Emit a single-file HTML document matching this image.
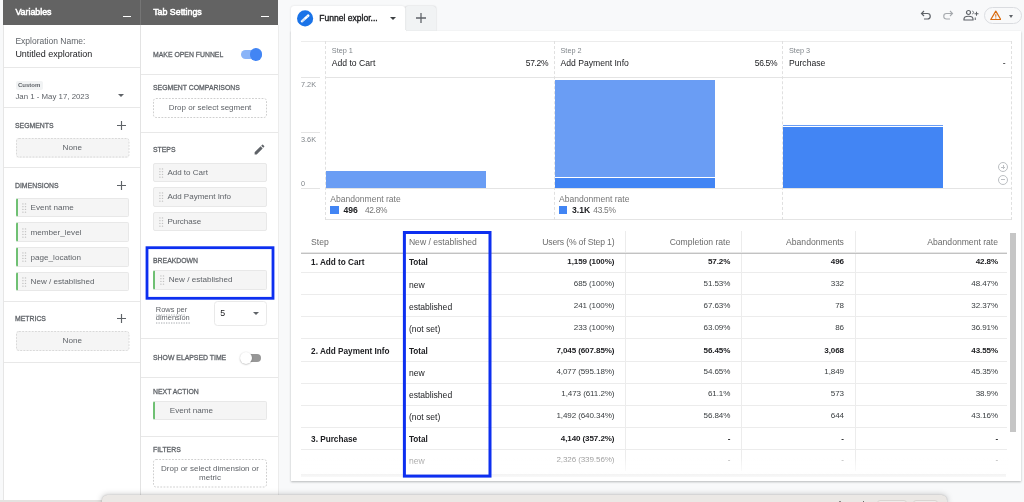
<!DOCTYPE html>
<html><head><meta charset="utf-8">
<style>
*{box-sizing:border-box;margin:0;padding:0}
html,body{width:1024px;height:502px;overflow:hidden;background:#f8f9fa;font-family:"Liberation Sans",sans-serif;color:#202124}
#root{position:relative;width:1024px;height:502px;overflow:hidden;transform:translateZ(0);filter:contrast(1.0001)}
.a{position:absolute}
.t{position:absolute;white-space:nowrap;line-height:12px;height:12px}
.hd{background:#636363}
.pn{background:#fff}
.dv{position:absolute;height:1px;background:#e8e8e8}
.lbl{font-weight:400;font-size:7.4px;color:#5f6368;-webkit-text-stroke:0.3px #5f6368;transform:scaleX(.93);transform-origin:0 50%}
.chip{position:absolute;background:#f5f5f5;border:1px solid #e8e8e8;border-radius:2px}
.chip.g{border-left:2px solid #6fc073}
.chipd{position:absolute;background:#f5f5f5;border-radius:2px}.dsh{position:absolute;left:0;top:0;width:100%;height:100%;overflow:visible}
.drop{position:absolute;background:#fff;border-radius:3px}
.ct{font-size:8.1px;color:#5f6368}
.grip{position:absolute;width:5.4px;height:11px;background-image:radial-gradient(circle,#b9b9b9 0.65px,transparent 1.05px);background-size:2.7px 2.75px}
.plus{position:absolute;width:9px;height:9px}
.plus:before{content:"";position:absolute;left:0;top:3.9px;width:9px;height:1.2px;background:#5f6368}
.plus:after{content:"";position:absolute;left:3.9px;top:0;width:1.2px;height:9px;background:#5f6368}

.ax{font-size:7.3px;color:#80868b}
.st{font-size:7.3px;color:#80868b}
.sn{font-size:8.6px;color:#202124}
.ar{font-size:8.57px;color:#757575}
.av{font-size:8.6px;font-weight:700;color:#202124}
.ap{font-size:8.4px;color:#757575;letter-spacing:-0.3px}
.zi{position:absolute;width:10px;height:10px;border:1px solid #bcbfc3;border-radius:50%}
.zi i{position:absolute;background:#bcbfc3}

.th{font-size:8.6px;color:#6b6b6b}
.tb{font-size:8.2px;font-weight:700;color:#202124;margin-top:1px}
.tx{font-size:8.55px;color:#202124}
.tn{font-size:8.05px;color:#3c4043;letter-spacing:-0.1px;margin-top:-1px}
.tnb{font-size:8.05px;font-weight:700;color:#202124;letter-spacing:-0.1px}
.fd{color:#8f8f8f}
</style></head><body><div id="root">
<svg width="0" height="0" style="position:absolute"><defs>
<g id="grip"><circle cx="0.9" cy="0.9" r="0.72"/><circle cx="3.5" cy="0.9" r="0.72"/><circle cx="0.9" cy="3.65" r="0.72"/><circle cx="3.5" cy="3.65" r="0.72"/><circle cx="0.9" cy="6.4" r="0.72"/><circle cx="3.5" cy="6.4" r="0.72"/><circle cx="0.9" cy="9.15" r="0.72"/><circle cx="3.5" cy="9.15" r="0.72"/></g>
<g id="plus"><path d="M0 4.500H9M4.500 0V9" stroke="#5f6368" stroke-width="1.150" fill="none"/></g>
</defs></svg>


<!-- LEFT PANELS -->
<div class="a pn" style="left:3px;top:0;width:275px;height:502px;border-left:1px solid #e6e6e6"></div>
<div class="a hd" style="left:3px;top:0;width:275px;height:24.5px"></div>
<div class="a" style="left:140px;top:0;width:1px;height:24.5px;background:#757575"></div>
<div class="a" style="left:140px;top:24.5px;width:1px;height:478px;background:#e3e3e3"></div>
<div class="a" style="left:278px;top:24.5px;width:1px;height:478px;background:#ececec"></div>

<!-- Variables panel -->
<div class="t" style="left:15.4px;top:6px;font-size:8.84px;font-weight:400;-webkit-text-stroke:0.55px #fff;color:#fff">Variables</div>
<div class="a" style="left:123.3px;top:16px;width:7.7px;height:1px;background:#fff"></div>
<div class="t" style="left:15.4px;top:35px;font-size:8.5px;color:#5f6368">Exploration Name:</div>
<div class="t" style="left:15.4px;top:48px;font-size:8.97px;color:#202124">Untitled exploration</div>
<div class="dv" style="left:4px;top:67px;width:136px"></div>
<div class="a" style="left:15.7px;top:80.8px;width:27px;height:9.3px;background:#f1f3f4;border-radius:2px"></div>
<div class="t" style="left:18px;top:78.5px;font-size:6px;font-weight:700;color:#5f6368">Custom</div>
<div class="t" style="left:15.4px;top:91px;font-size:7.85px;color:#5f6368">Jan 1 - May 17, 2023</div>
<div class="a" style="left:117.5px;top:94px;width:0;height:0;border-left:3px solid transparent;border-right:3px solid transparent;border-top:3px solid #5f6368"></div>
<div class="dv" style="left:4px;top:107.2px;width:136px"></div>

<div class="t lbl" style="left:15.4px;top:119.5px">SEGMENTS</div>
<svg class="a" style="left:117.0px;top:120.5px" width="9" height="9"><use href="#plus"/></svg>
<div class="chipd" style="left:15.5px;top:138px;width:113.5px;height:19.5px"><svg class="dsh" width="113.5" height="19.5"><rect x="0.5" y="0.5" width="112.5" height="18.5" rx="2.500" fill="none" stroke="#d9d9d9" stroke-width="1" stroke-dasharray="1.800 1.400"/></svg></div>
<div class="t ct" style="left:15.5px;width:113.5px;text-align:center;top:142px">None</div>
<div class="dv" style="left:4px;top:167px;width:136px"></div>

<div class="t lbl" style="left:15.4px;top:179.5px">DIMENSIONS</div>
<svg class="a" style="left:117.0px;top:180.5px" width="9" height="9"><use href="#plus"/></svg>
<div class="chip g" style="left:15.5px;top:197.5px;width:113.5px;height:19.5px"></div>
<svg class="a" style="left:21.5px;top:202.9px" width="5" height="11" fill="#c2c2c2"><use href="#grip"/></svg>
<div class="t ct" style="left:30.6px;top:201.5px">Event name</div>
<div class="chip g" style="left:15.5px;top:222.2px;width:113.5px;height:19.5px"></div>
<svg class="a" style="left:21.5px;top:227.6px" width="5" height="11" fill="#c2c2c2"><use href="#grip"/></svg>
<div class="t ct" style="left:30.6px;top:227px">member_level</div>
<div class="chip g" style="left:15.5px;top:247px;width:113.5px;height:19.5px"></div>
<svg class="a" style="left:21.5px;top:252.4px" width="5" height="11" fill="#c2c2c2"><use href="#grip"/></svg>
<div class="t ct" style="left:30.6px;top:251.6px">page_location</div>
<div class="chip g" style="left:15.5px;top:271.7px;width:113.5px;height:19.5px"></div>
<svg class="a" style="left:21.5px;top:277.1px" width="5" height="11" fill="#c2c2c2"><use href="#grip"/></svg>
<div class="t ct" style="left:30.6px;top:275.7px">New / established</div>
<div class="dv" style="left:4px;top:301px;width:136px"></div>

<div class="t lbl" style="left:15.4px;top:313px">METRICS</div>
<svg class="a" style="left:117.0px;top:314.0px" width="9" height="9"><use href="#plus"/></svg>
<div class="chipd" style="left:15.5px;top:331px;width:113.5px;height:20px"><svg class="dsh" width="113.5" height="20.0"><rect x="0.5" y="0.5" width="112.5" height="19.0" rx="2.500" fill="none" stroke="#d9d9d9" stroke-width="1" stroke-dasharray="1.800 1.400"/></svg></div>
<div class="t ct" style="left:15.5px;width:113.5px;text-align:center;top:335px">None</div>
<div class="dv" style="left:4px;top:361.5px;width:136px"></div>

<!-- Tab settings panel -->
<div class="t" style="left:153.2px;top:6px;font-size:8.84px;font-weight:400;-webkit-text-stroke:0.55px #fff;color:#fff">Tab Settings</div>
<div class="a" style="left:261.3px;top:16px;width:7.7px;height:1px;background:#fff"></div>

<div class="t lbl" style="left:153.2px;top:48.5px">MAKE OPEN FUNNEL</div>
<div class="a" style="left:240.5px;top:50px;width:21px;height:8.5px;border-radius:5px;background:#8ab4f8"></div>
<div class="a" style="left:249.5px;top:48px;width:12.5px;height:12.5px;border-radius:50%;background:#4285f4"></div>
<div class="dv" style="left:141px;top:74px;width:137px"></div>

<div class="t lbl" style="left:153.2px;top:81.8px">SEGMENT COMPARISONS</div>
<div class="drop" style="left:153px;top:97.5px;width:114px;height:20px"><svg class="dsh" width="114.0" height="20.0"><rect x="0.5" y="0.5" width="113.0" height="19.0" rx="2.500" fill="none" stroke="#cfcfcf" stroke-width="1" stroke-dasharray="1.800 1.400"/></svg></div>
<div class="t ct" style="left:153px;width:114px;text-align:center;top:102px;font-size:8px">Drop or select segment</div>
<div class="dv" style="left:141px;top:132px;width:137px"></div>

<div class="t lbl" style="left:153.2px;top:144px">STEPS</div>
<svg class="a" style="left:253px;top:143px" width="13" height="13" viewBox="0 0 24 24"><path fill="#5f6368" d="M3 17.25V21h3.75L17.81 9.94l-3.75-3.75L3 17.25zM20.71 7.04a1 1 0 0 0 0-1.41l-2.34-2.34a1 1 0 0 0-1.41 0l-1.83 1.83 3.75 3.75 1.83-1.83z"/></svg>
<div class="chip" style="left:153px;top:162.5px;width:114px;height:19.5px"></div>
<svg class="a" style="left:159.0px;top:167.9px" width="5" height="11" fill="#c2c2c2"><use href="#grip"/></svg>
<div class="t ct" style="left:167.4px;top:166.5px;font-size:8px">Add to Cart</div>
<div class="chip" style="left:153px;top:187px;width:114px;height:19.5px"></div>
<svg class="a" style="left:159.0px;top:192.4px" width="5" height="11" fill="#c2c2c2"><use href="#grip"/></svg>
<div class="t ct" style="left:167.4px;top:191px;font-size:8px">Add Payment Info</div>
<div class="chip" style="left:153px;top:211.7px;width:114px;height:19.5px"></div>
<svg class="a" style="left:159.0px;top:217.1px" width="5" height="11" fill="#c2c2c2"><use href="#grip"/></svg>
<div class="t ct" style="left:167.4px;top:215.7px;font-size:8px">Purchase</div>

<svg class="a" style="left:140px;top:240px" width="140" height="65"><rect x="7" y="7.700" width="126" height="50.600" fill="none" stroke="#0d2ff0" stroke-width="2.800"/></svg>
<div class="t lbl" style="left:153.2px;top:254.5px">BREAKDOWN</div>
<div class="chip g" style="left:153px;top:270px;width:114px;height:19.5px"></div>
<svg class="a" style="left:159.5px;top:275.4px" width="5" height="11" fill="#c2c2c2"><use href="#grip"/></svg>
<div class="t ct" style="left:168.7px;top:274px">New / established</div>

<div class="t" style="left:155.8px;top:304px;font-size:7.45px;color:#5f6368">Rows per</div>
<div class="t" style="left:155.8px;top:311.5px;font-size:7.45px;color:#5f6368">dimension</div>
<svg class="a" style="left:155.8px;top:322.300px" width="34.200" height="2"><path d="M0 1H34.200" stroke="#a4a8ad" stroke-width="1" stroke-dasharray="1.300 1.200"/></svg><svg class="a" style="left:155.8px;top:313.600px" width="30" height="2"><path d="M0 1H30" stroke="#b4b8bc" stroke-width="1" stroke-dasharray="1.300 1.200"/></svg>
<div class="a" style="left:214px;top:301px;width:53px;height:25px;border:1px solid #e9e9e9;border-radius:3.5px;background:#fff"></div>
<div class="t" style="left:220.3px;top:307px;font-size:8.800px;color:#202124">5</div>
<div class="a" style="left:252.5px;top:312px;width:0;height:0;border-left:3px solid transparent;border-right:3px solid transparent;border-top:3px solid #5f6368"></div>
<div class="dv" style="left:141px;top:338px;width:137px"></div>

<div class="t lbl" style="left:153.2px;top:352px">SHOW ELAPSED TIME</div>
<div class="a" style="left:243px;top:354px;width:18px;height:8px;border-radius:4px;background:#979797"></div>
<div class="a" style="left:239.5px;top:351.5px;width:12.5px;height:12.5px;border-radius:50%;background:#fff;box-shadow:0 0.5px 1.600px rgba(0,0,0,.32)"></div>
<div class="dv" style="left:141px;top:377px;width:137px"></div>

<div class="t lbl" style="left:153.2px;top:385.5px">NEXT ACTION</div>
<div class="chip g" style="left:153px;top:400.7px;width:114px;height:19.8px"></div>
<div class="t ct" style="left:169.8px;top:404.8px">Event name</div>
<div class="dv" style="left:141px;top:435.5px;width:137px"></div>

<div class="t lbl" style="left:153.2px;top:444px">FILTERS</div>
<div class="drop" style="left:153px;top:459px;width:114px;height:28.5px"><svg class="dsh" width="114.0" height="28.5"><rect x="0.5" y="0.5" width="113.0" height="27.5" rx="2.500" fill="none" stroke="#cfcfcf" stroke-width="1" stroke-dasharray="1.800 1.400"/></svg></div>
<div class="t ct" style="left:153px;width:114px;text-align:center;top:463px;font-size:8px">Drop or select dimension or</div>
<div class="t ct" style="left:153px;width:114px;text-align:center;top:472px;font-size:8px">metric</div>

<!-- MAIN -->

<!-- tabs -->
<div class="a" style="left:405px;top:5.5px;width:31px;height:25px;background:#f1f3f4;border-radius:3px 3px 0 0;box-shadow:0 0 1.5px rgba(0,0,0,.25)"></div>
<div class="a" style="left:291.3px;top:30.5px;width:730.2px;height:450.5px;background:#fff;box-shadow:0 0.5px 2px rgba(60,64,67,.35)"></div>
<div class="a" style="left:291.3px;top:5.5px;width:113.7px;height:27px;background:#fff;border-radius:3px 3px 0 0;box-shadow:0 0 2px rgba(60,64,67,.16)"></div>
<div class="a" style="left:291.3px;top:30px;width:114.5px;height:7px;background:#fff"></div>
<svg class="a" style="left:296px;top:9px" width="19" height="19" viewBox="0 0 19 19"><circle cx="9.1" cy="9.400" r="8.050" fill="#1a73e8"/><g transform="translate(9.1 9.400) rotate(-42)"><rect x="-5.300" y="-1.250" width="10.600" height="2.500" rx="0.900" fill="#fff"/><path d="M-3.800 -1.250V1.250M-2.400 -1.250V1.250M-1 -1.250V1.250" stroke="#1a73e8" stroke-width="0.450" opacity=".75"/><path d="M2.900 -1.250V1.250" stroke="#1a73e8" stroke-width="0.500" opacity=".5"/></g></svg>
<div class="t" style="left:319.3px;top:12px;font-size:8.55px;font-weight:400;color:#202124;-webkit-text-stroke:0.35px #202124">Funnel explor...</div>
<div class="a" style="left:390px;top:16.5px;width:0;height:0;border-left:3px solid transparent;border-right:3px solid transparent;border-top:3px solid #3c4043"></div>
<svg class="a" style="left:415.8px;top:13.2px" width="10" height="10" viewBox="0 0 9 9"><use href="#plus"/></svg>

<!-- top-right icons -->
<svg class="a" style="left:920px;top:8.900px" width="12" height="12" viewBox="0 0 24 24" fill="none" stroke="#5f6368" stroke-width="2.4"><path d="M8 4 L3 9 L8 14"/><path d="M3 9 H15 a5.5 5.5 0 0 1 0 11 H8"/></svg>
<svg class="a" style="left:942px;top:8.900px" width="12" height="12" viewBox="0 0 24 24" fill="none" stroke="#a5a9ad" stroke-width="2.2"><path d="M16 4 L21 9 L16 14"/><path d="M21 9 H9 a5.5 5.5 0 0 0 0 11 H16"/></svg>
<svg class="a" style="left:962.5px;top:8.800px" width="16" height="12" viewBox="0 0 32 24" fill="none" stroke="#5f6368" stroke-width="2.4"><circle cx="11" cy="7" r="4"/><path d="M2 22 v-2 c0-4 5-5.5 9-5.5 s9 1.500 9 5.500 v2 z"/><path d="M19 3.500 a4.500 4.500 0 0 1 0 7" stroke-width="1.800"/><path d="M27 5.500 v8 M23 9.500 h8" stroke-width="2"/><path d="M24.500 17 v5" stroke-width="2"/></svg>
<div class="a" style="left:984.4px;top:6.6px;width:37.2px;height:17px;border:1px solid #dadce0;border-radius:9px;background:#f8f9fa"></div>
<svg class="a" style="left:989.6px;top:10.3px" width="11.600" height="10" viewBox="0 0 24 21"><path d="M12 2.500 L22.500 20 H1.500 Z" fill="none" stroke="#d96b0f" stroke-width="2.600" stroke-linejoin="round"/><path d="M12 9 v5 M12 16 v2" stroke="#d96b0f" stroke-width="2.200"/></svg>
<div class="a" style="left:1008.9px;top:14.5px;width:0;height:0;border-left:2.600px solid transparent;border-right:2.600px solid transparent;border-top:3px solid #5f6368"></div>

<!-- chart -->
<div class="a" style="left:301px;top:40.5px;width:711px;height:1.5px;background:#ececec"></div>
<div class="a" style="left:301px;top:77px;width:19px;height:1px;background:#e4e4e4"></div><div class="a" style="left:326px;top:77px;width:686px;height:1px;background:#e4e4e4"></div>
<div class="a" style="left:301px;top:132px;width:19px;height:1px;background:#e4e4e4"></div>
<div class="a" style="left:301px;top:188px;width:19px;height:1px;background:#e4e4e4"></div><div class="a" style="left:326px;top:188px;width:686px;height:1px;background:#e4e4e4"></div>
<div class="a" style="left:326px;top:219.3px;width:686px;height:1px;background:#e4e4e4"></div>
<div class="a" style="left:325px;top:41px;width:0;height:179px;border-left:1px dashed #e0e0e0"></div>
<div class="a" style="left:554.2px;top:41px;width:0;height:179px;border-left:1px dashed #e0e0e0"></div>
<div class="a" style="left:782px;top:41px;width:0;height:179px;border-left:1px dashed #e0e0e0"></div>
<div class="a" style="left:1011px;top:41px;width:0;height:179px;border-left:1px dashed #e0e0e0"></div>

<div class="t ax" style="left:301px;top:79px">7.2K</div>
<div class="t ax" style="left:301px;top:134.3px">3.6K</div>
<div class="t ax" style="left:301px;top:178px">0</div>

<div class="t st" style="left:331.8px;top:45px">Step 1</div>
<div class="t sn" style="left:331.8px;top:56.5px">Add to Cart</div>
<div class="t sn" style="left:498px;width:50.2px;text-align:right;top:56.5px;font-size:8.5px;letter-spacing:-0.35px">57.2%</div>
<div class="t st" style="left:560.5px;top:45px">Step 2</div>
<div class="t sn" style="left:560.5px;top:56.5px">Add Payment Info</div>
<div class="t sn" style="left:727px;width:50.2px;text-align:right;top:56.5px;font-size:8.5px;letter-spacing:-0.35px">56.5%</div>
<div class="t st" style="left:789px;top:45px">Step 3</div>
<div class="t sn" style="left:789px;top:56.5px">Purchase</div>
<div class="t sn" style="left:955px;width:50.5px;text-align:right;top:56.5px">-</div>

<div class="a" style="left:326px;top:170.7px;width:160px;height:17.7px;background:#6a9df4"></div>
<div class="a" style="left:554.5px;top:79.700px;width:160px;height:108.7px;background:#6a9df4"></div>
<div class="a" style="left:554.5px;top:178.4px;width:160px;height:10px;background:#4285f4"></div>
<div class="a" style="left:554.5px;top:177.3px;width:160px;height:1.1px;background:#fff"></div>
<div class="a" style="left:783px;top:127.3px;width:160px;height:61.1px;background:#4285f4"></div>
<div class="a" style="left:783px;top:125px;width:160px;height:1.2px;background:#6a9df4"></div>


<div class="t ar" style="left:330.3px;top:192.7px">Abandonment rate</div>
<div class="a" style="left:330.2px;top:206.1px;width:8.5px;height:8.300px;background:#4285f4"></div>
<div class="t av" style="left:343.4px;top:204.4px">496</div>
<div class="t ap" style="left:364.9px;top:204.4px">42.8%</div>
<div class="t ar" style="left:559px;top:192.7px">Abandonment rate</div>
<div class="a" style="left:558.9px;top:206.1px;width:8.5px;height:8.300px;background:#4285f4"></div>
<div class="t av" style="left:572px;top:204.4px">3.1K</div>
<div class="t ap" style="left:593.3px;top:204.4px">43.5%</div>

<div class="zi" style="left:998px;top:162px"><i style="left:1.800px;top:3.500px;width:4.400px;height:1px"></i><i style="left:3.500px;top:1.800px;width:1px;height:4.400px"></i></div>
<div class="zi" style="left:998px;top:174.7px"><i style="left:1.800px;top:3.500px;width:4.400px;height:1px"></i></div>

<!-- table -->
<div class="a" style="left:624.5px;top:230.6px;width:1px;height:240px;background:#ececec"></div>
<div class="a" style="left:740.8px;top:230.6px;width:1px;height:240px;background:#ececec"></div>
<div class="a" style="left:854.7px;top:230.6px;width:1px;height:240px;background:#ececec"></div>
<div class="t th" style="left:311.1px;top:236.4px">Step</div>
<div class="t th" style="left:408.9px;top:236.4px">New / established</div>
<div class="t th" style="left:494.4px;width:120px;text-align:right;top:236.4px;letter-spacing:-0.15px">Users (% of Step 1)</div>
<div class="t th" style="left:610.3px;width:120px;text-align:right;top:236.4px">Completion rate</div>
<div class="t th" style="left:723.9px;width:120px;text-align:right;top:236.4px">Abandonments</div>
<div class="t th" style="left:878px;width:120px;text-align:right;top:236.4px">Abandonment rate</div>
<div class="a" style="left:301.3px;top:252px;width:706px;height:1px;background:#e6e6e6"></div><div class="a" style="left:301.3px;top:253px;width:706px;height:1px;background:#c2c2c2"></div>
<div class="a" style="left:301.3px;top:272px;width:706px;height:1px;background:#ececec"></div>
<div class="t tb" style="left:311.1px;top:256.4px">1. Add to Cart</div>
<div class="t tb" style="left:408.9px;top:256.4px">Total</div>
<div class="t tnb" style="left:494.4px;width:120px;text-align:right;top:256.4px">1,159 (100%)</div>
<div class="t tnb" style="left:610.3px;width:120px;text-align:right;top:256.4px">57.2%</div>
<div class="t tnb" style="left:723.9px;width:120px;text-align:right;top:256.4px">496</div>
<div class="t tnb" style="left:878px;width:120px;text-align:right;top:256.4px">42.8%</div>
<div class="a" style="left:301.3px;top:294px;width:706px;height:1px;background:#ececec"></div>
<div class="t tx" style="left:408.9px;top:278.5px">new</div>
<div class="t tn" style="left:494.4px;width:120px;text-align:right;top:278.5px">685 (100%)</div>
<div class="t tn" style="left:610.3px;width:120px;text-align:right;top:278.5px">51.53%</div>
<div class="t tn" style="left:723.9px;width:120px;text-align:right;top:278.5px">332</div>
<div class="t tn" style="left:878px;width:120px;text-align:right;top:278.5px">48.47%</div>
<div class="a" style="left:301.3px;top:316px;width:706px;height:1px;background:#ececec"></div>
<div class="t tx" style="left:408.9px;top:300.6px">established</div>
<div class="t tn" style="left:494.4px;width:120px;text-align:right;top:300.6px">241 (100%)</div>
<div class="t tn" style="left:610.3px;width:120px;text-align:right;top:300.6px">67.63%</div>
<div class="t tn" style="left:723.9px;width:120px;text-align:right;top:300.6px">78</div>
<div class="t tn" style="left:878px;width:120px;text-align:right;top:300.6px">32.37%</div>
<div class="a" style="left:301.3px;top:338px;width:706px;height:1px;background:#ececec"></div>
<div class="t tx" style="left:408.9px;top:322.7px">(not set)</div>
<div class="t tn" style="left:494.4px;width:120px;text-align:right;top:322.7px">233 (100%)</div>
<div class="t tn" style="left:610.3px;width:120px;text-align:right;top:322.7px">63.09%</div>
<div class="t tn" style="left:723.9px;width:120px;text-align:right;top:322.7px">86</div>
<div class="t tn" style="left:878px;width:120px;text-align:right;top:322.7px">36.91%</div>
<div class="a" style="left:301.3px;top:361px;width:706px;height:1px;background:#ececec"></div>
<div class="t tb" style="left:311.1px;top:344.8px">2. Add Payment Info</div>
<div class="t tb" style="left:408.9px;top:344.8px">Total</div>
<div class="t tnb" style="left:494.4px;width:120px;text-align:right;top:344.8px">7,045 (607.85%)</div>
<div class="t tnb" style="left:610.3px;width:120px;text-align:right;top:344.8px">56.45%</div>
<div class="t tnb" style="left:723.9px;width:120px;text-align:right;top:344.8px">3,068</div>
<div class="t tnb" style="left:878px;width:120px;text-align:right;top:344.8px">43.55%</div>
<div class="a" style="left:301.3px;top:383px;width:706px;height:1px;background:#ececec"></div>
<div class="t tx" style="left:408.9px;top:366.9px">new</div>
<div class="t tn" style="left:494.4px;width:120px;text-align:right;top:366.9px">4,077 (595.18%)</div>
<div class="t tn" style="left:610.3px;width:120px;text-align:right;top:366.9px">54.65%</div>
<div class="t tn" style="left:723.9px;width:120px;text-align:right;top:366.9px">1,849</div>
<div class="t tn" style="left:878px;width:120px;text-align:right;top:366.9px">45.35%</div>
<div class="a" style="left:301.3px;top:405px;width:706px;height:1px;background:#ececec"></div>
<div class="t tx" style="left:408.9px;top:389.0px">established</div>
<div class="t tn" style="left:494.4px;width:120px;text-align:right;top:389.0px">1,473 (611.2%)</div>
<div class="t tn" style="left:610.3px;width:120px;text-align:right;top:389.0px">61.1%</div>
<div class="t tn" style="left:723.9px;width:120px;text-align:right;top:389.0px">573</div>
<div class="t tn" style="left:878px;width:120px;text-align:right;top:389.0px">38.9%</div>
<div class="a" style="left:301.3px;top:427px;width:706px;height:1px;background:#ececec"></div>
<div class="t tx" style="left:408.9px;top:411.1px">(not set)</div>
<div class="t tn" style="left:494.4px;width:120px;text-align:right;top:411.1px">1,492 (640.34%)</div>
<div class="t tn" style="left:610.3px;width:120px;text-align:right;top:411.1px">56.84%</div>
<div class="t tn" style="left:723.9px;width:120px;text-align:right;top:411.1px">644</div>
<div class="t tn" style="left:878px;width:120px;text-align:right;top:411.1px">43.16%</div>
<div class="a" style="left:301.3px;top:449px;width:706px;height:1px;background:#ececec"></div>
<div class="t tb" style="left:311.1px;top:433.2px">3. Purchase</div>
<div class="t tb" style="left:408.9px;top:433.2px">Total</div>
<div class="t tnb" style="left:494.4px;width:120px;text-align:right;top:433.2px">4,140 (357.2%)</div>
<div class="t tnb" style="left:610.3px;width:120px;text-align:right;top:433.2px">-</div>
<div class="t tnb" style="left:723.9px;width:120px;text-align:right;top:433.2px">-</div>
<div class="t tnb" style="left:878px;width:120px;text-align:right;top:433.2px">-</div>
<div class="t tx fd" style="left:408.9px;top:455.3px">new</div>
<div class="t tn fd" style="left:494.4px;width:120px;text-align:right;top:455.3px">2,326 (339.56%)</div>
<div class="t tn fd" style="left:610.3px;width:120px;text-align:right;top:455.3px">-</div>
<div class="t tn fd" style="left:723.9px;width:120px;text-align:right;top:455.3px">-</div>
<div class="t tn fd" style="left:878px;width:120px;text-align:right;top:455.3px">-</div>
<div class="a" style="left:301px;top:456px;width:708px;height:18px;background:linear-gradient(rgba(255,255,255,0),rgba(255,255,255,.9))"></div>
<div class="a" style="left:301px;top:473.5px;width:705px;height:3.5px;background:linear-gradient(#f3f3f3,#f8f8f8)"></div>
<svg class="a" style="left:400px;top:228px" width="95" height="252"><rect x="4.400" y="4.500" width="85.600" height="243.600" fill="none" stroke="#0d2ff0" stroke-width="3"/></svg>
<div class="a" style="left:1010px;top:232.8px;width:6px;height:199.5px;background:#c6c6c6"></div>
<div class="a" style="left:0;top:500px;width:102px;height:2px;background:#e4e2e0"></div>
<div class="a" style="left:101.5px;top:494.5px;width:845px;height:10px;background:#ebe8e5;border-radius:5.5px 5.5px 0 0;box-shadow:0 0 6px rgba(0,0,0,.26),0 0 1.5px rgba(0,0,0,.2)"></div>
<div class="a" style="left:877.4px;top:499.6px;width:29.5px;height:8px;border:1px solid #d9d5d2;border-radius:3px;background:#efedeb"></div>
<div class="a" style="left:913px;top:499.6px;width:24.6px;height:8px;border:1px solid #d9d5d2;border-radius:3px;background:#efedeb"></div>
<div class="a" style="left:838.5px;top:500.6px;width:2px;height:2px;background:#6b6a69;border-radius:1px"></div>
<div class="a" style="left:863px;top:500.8px;width:1.2px;height:2px;background:#6b6a69"></div>

</div></body></html>
